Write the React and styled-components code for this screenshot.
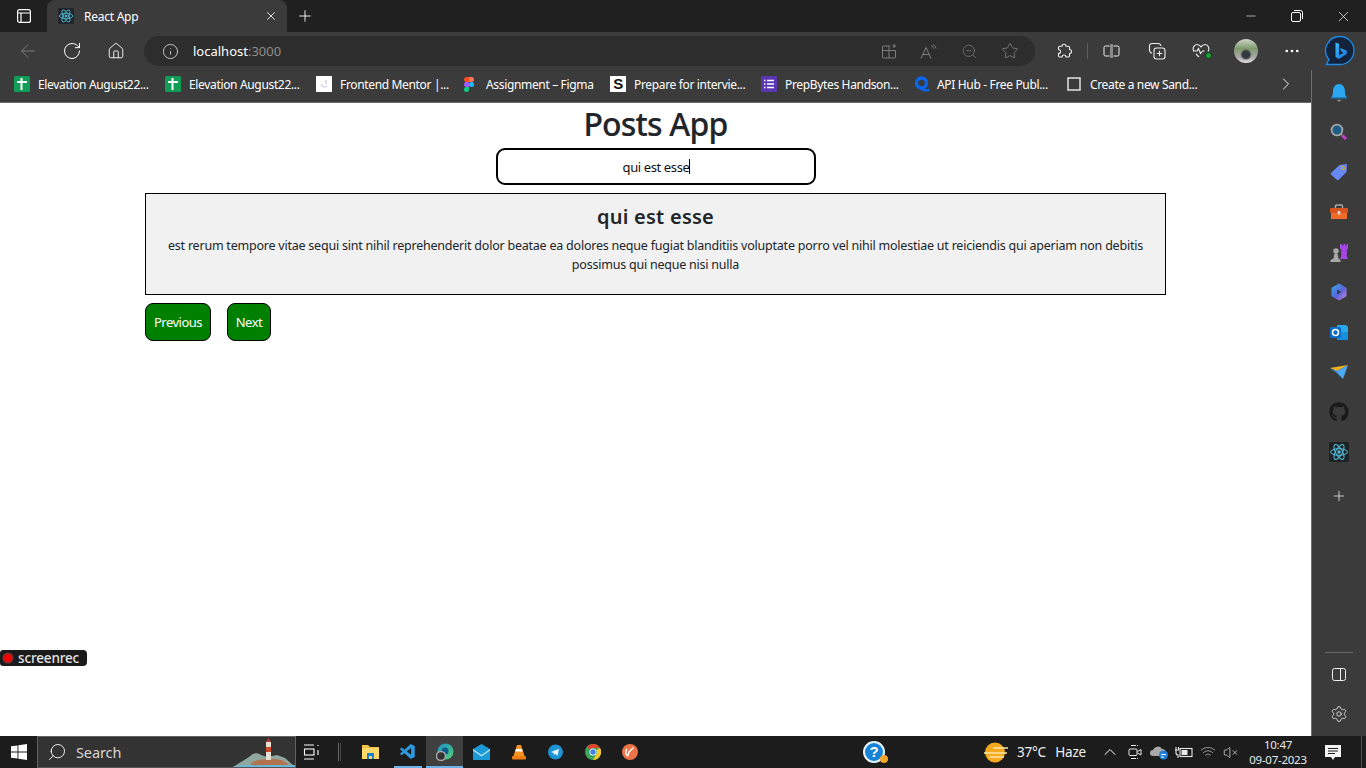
import React from "react";
import styled, { createGlobalStyle } from "styled-components";
import {
  ArrowLeft, RotateCw, Home, Info, ZoomOut, Star, MoreHorizontal, X, Plus, Minus,
  ChevronRight, ChevronUp, Wifi, VolumeX, Search as SearchIcon, Settings,
} from "lucide-react";
import { FaGithub } from "react-icons/fa";
import { VscVscode } from "react-icons/vsc";

const Global = createGlobalStyle`
  html, body { margin: 0; padding: 0; background: #fff; }
  * { box-sizing: border-box; }
  body { font-family: "Noto Sans", "Open Sans", "Liberation Sans", sans-serif; }
`;

const Screen = styled.div`
  width: 1366px; height: 768px; overflow: hidden;
  display: flex; flex-direction: column; background: #fff;
`;
const TabStrip = styled.div`
  height: 32px; flex: none; display: flex; align-items: stretch; background: #202020; color: #fff;
`;
const Slot = styled.div`
  width: ${(p) => p.$w}px; flex: none; display: flex; align-items: center; justify-content: center;
  position: relative;
`;
const Tab = styled.div`
  width: 240px; flex: none; background: #3b3b3b; border-radius: 8px 8px 0 0;
  display: flex; align-items: center; padding-left: 11px; font-size: 12px; color: #fff;
  letter-spacing: -0.25px;
`;
const TabTitle = styled.span`
  margin-left: 10px; flex: 1;
`;
const Grow = styled.div`
  flex: 1;
`;
const NavBar = styled.div`
  height: 38px; flex: none; background: #3b3b3b; display: flex; align-items: center;
  padding-left: 6px; color: #fff;
`;
const AddressBar = styled.div`
  width: 891px; height: 30px; flex: none; margin-left: 6px; margin-right: 6px;
  background: #2d2d2d; border-radius: 15px; display: flex; align-items: center;
  padding-left: 18px; padding-right: 4px; font-size: 13px;
`;
const Host = styled.span`
  margin-left: 14px; flex: 1; color: #fff;
`;
const Port = styled.span`
  color: #8d8d8d;
`;
const VLine = styled.div`
  width: 1px; height: 16px; background: #5d5d5d;
`;
const Middle = styled.div`
  flex: 1; min-height: 0; display: flex;
`;
const Left = styled.div`
  flex: 1; min-width: 0; display: flex; flex-direction: column;
`;
const BookmarkBar = styled.div`
  height: 33px; flex: none; background: #3b3b3b; border-bottom: 1px solid #6a6a6a;
  display: flex; align-items: center; padding: 0 0 4px 14px; color: #fff;
`;
const Bookmark = styled.div`
  width: ${(p) => p.$w}px; flex: none; display: flex; align-items: center;
  font-size: 12px; letter-spacing: -0.34px; white-space: nowrap;
`;
const BookmarkLabel = styled.span`
  margin-left: ${(p) => p.$gap || 8}px;
`;
const LetterIcon = styled.span`
  width: 16px; height: 16px; flex: none; background: #fff; color: #111; font: 700 15px/16px "Liberation Sans", sans-serif;
  text-align: center;
`;
const Page = styled.main`
  position: relative; flex: 1; min-height: 0; background: #fff; color: #212529;
  display: flex; flex-direction: column; align-items: center;
`;
const Heading = styled.h1`
  margin: 0; font-size: 32px; line-height: 42px; font-weight: 500; letter-spacing: -0.8px; color: #212529;
  -webkit-text-stroke: 0.15px #212529;
`;
const SearchField = styled.div`
  width: 320px; height: 37px; margin-top: 3px; border: 2px solid #000; border-radius: 9px;
  display: flex; align-items: center; justify-content: center; padding-left: 2px;
  font-size: 13px; letter-spacing: -0.38px; color: #111;
`;
const Caret = styled.span`
  width: 1px; height: 15px; background: #000;
`;
const Content = styled.section`
  width: 1021px; margin-top: 8px;
`;
const Card = styled.article`
  height: 102px; background: #f1f1f1; border: 1px solid #000; text-align: center;
  padding: 9px 16px 0; color: #212529;
`;
const CardTitle = styled.h2`
  margin: 0; font-size: 20px; line-height: 28px; font-weight: 600; letter-spacing: 0.25px;
`;
const CardBody = styled.p`
  margin: 5px 0 0; font-size: 12.5px; line-height: 19px; letter-spacing: -0.225px;
`;
const Pager = styled.div`
  display: flex; gap: 16px; margin-top: 8px;
`;
const PagerButton = styled.button`
  height: 38px; width: ${(p) => p.$w}px; background: #008000; color: #fff; border: 1px solid #000;
  border-radius: 8px; font: 13px "Noto Sans", sans-serif; letter-spacing: -0.5px; padding: 0;
`;
const RecBadge = styled.div`
  position: absolute; left: 0; top: 547px; width: 87px; height: 16px; background: #1b1b1b;
  border-radius: 3px 4px 4px 3px; display: flex; align-items: center; padding-left: 3px;
  color: #e4e4e4; font-size: 13.5px; font-weight: 500; letter-spacing: -0.15px; line-height: 16px;
`;
const RecDot = styled.span`
  width: 8px; height: 8px; border-radius: 50%; background: #f40000; box-shadow: 0 0 0 1.5px #7a3535;
  margin-right: 6px; margin-left: 1px;
`;
const Sidebar = styled.aside`
  width: 55px; flex: none; background: #3b3b3b; border-left: 1px solid #6d6d6d;
  display: flex; flex-direction: column; align-items: center; padding: 2px 0; color: #ececec;
`;
const SideSlot = styled.div`
  height: 40px; width: 100%; flex: none; display: flex; align-items: center; justify-content: center;
  margin-top: ${(p) => p.$offset || 0}px;
`;
const SideLine = styled.div`
  width: 28px; height: 1px; background: #6a6a6a; margin-top: auto; margin-bottom: 1px;
`;
const Taskbar = styled.footer`
  height: 32px; flex: none; background: #1c1c1c; display: flex; align-items: stretch; color: #fff;
`;
const SearchBox = styled.div`
  width: 259px; flex: none; background: #333; border: 1px solid #626262; border-bottom-color: #555;
  display: flex; align-items: center; padding-left: 9px; font-size: 14.5px; color: #d5d5d5; letter-spacing: -0.1px;
  position: relative; overflow: hidden;
`;
const LensGlyph = styled(SearchIcon)`
  transform: scaleX(-1);
`;
const SearchLabel = styled.span`
  margin-left: 9px;
`;
const AppSlot = styled.div`
  width: 37px; flex: none; display: flex; align-items: center; justify-content: center; position: relative;
  background: ${(p) => (p.$active ? "#404040" : "transparent")};
  &::after {
    content: ""; position: absolute; bottom: 0; height: 2px; background: #6cb2e8;
    left: ${(p) => (p.$active ? "0" : "5px")}; right: ${(p) => (p.$active ? "0" : "4px")};
    display: ${(p) => (p.$active || p.$open ? "block" : "none")};
  }
`;
const Tray = styled.div`
  margin-left: 209px; display: flex; align-items: stretch;
`;
const WeatherText = styled.span`
  align-self: center; font-size: 13.5px; letter-spacing: -0.2px; margin-left: 6px; color: #f0f0f0;
  white-space: nowrap; word-spacing: 6px; width: 81px;
`;
const Clock = styled.div`
  width: 64px; flex: none; display: flex; flex-direction: column; align-items: center; justify-content: center;
  font-size: 11.5px; line-height: 15px; letter-spacing: -0.25px; color: #e8e8e8;
`;
const DesktopEdge = styled.div`
  width: 1px; background: #4d4d4d; margin-left: 5px;
`;
const GreenDot = styled.span`
  position: absolute; right: 11px; bottom: 0; width: 7px; height: 7px; border-radius: 50%;
  background: #1f9d3a; border: 1px solid #0b3d17;
`;
const Avatar = styled.div`
  width: 24px; height: 24px; border-radius: 50%;
  background: radial-gradient(circle at 50% 65%, #33383f 0 18%, transparent 30%), linear-gradient(#cfd6c8 0%, #7f9a6c 40%, #a7a7a7 75%, #e3e3e3 100%);
`;

const ReactIcon = ({ size = 16, bg = "#20262b" }) => (
  <svg width={size} height={size} viewBox="0 0 20 20">
    <rect width="20" height="20" rx="2" fill={bg} />
    <g fill="none" stroke="#53c1de" strokeWidth="1">
      <ellipse cx="10" cy="10" rx="8.4" ry="3.3" />
      <ellipse cx="10" cy="10" rx="8.4" ry="3.3" transform="rotate(60 10 10)" />
      <ellipse cx="10" cy="10" rx="8.4" ry="3.3" transform="rotate(120 10 10)" />
    </g>
    <circle cx="10" cy="10" r="1.7" fill="#53c1de" />
  </svg>
);
const TabsIcon = () => (
  <svg width="16" height="16" viewBox="0 0 16 16" fill="none" stroke="#fff" strokeWidth="1.2">
    <rect x="1.6" y="1.6" width="12.8" height="12.8" rx="2" />
    <path d="M1.6 5h12.8M5 5v9.4" />
  </svg>
);
const CopyGlyph = () => (
  <svg width="12" height="12" viewBox="0 0 12 12" fill="none" stroke="#fff" strokeWidth="1">
    <rect x=".5" y="2.5" width="9" height="9" rx="1.5" />
    <path d="M3 .5h6.500A2 2 0 0 1 11.500 2.500V9" />
  </svg>
);
const SheetIcon = () => (
  <svg width="16" height="16" viewBox="0 0 16 16">
    <rect width="16" height="16" rx="1.5" fill="#0f9d58" />
    <path d="M3 6h10M7.500 2v12" stroke="#fff" strokeWidth="2" fill="none" />
  </svg>
);
const MentorIcon = () => (
  <svg width="16" height="16" viewBox="0 0 16 16">
    <rect width="16" height="16" fill="#fff" />
    <path d="M5 8c1 3 4 3.500 6 2M10 4v4" stroke="#b9b7e3" strokeWidth="1" fill="none" />
  </svg>
);
const FigmaIcon = () => (
  <svg width="10" height="15" viewBox="0 0 10 15">
    <path d="M0 2.500A2.500 2.500 0 0 1 2.500 0H5v5H2.500A2.500 2.500 0 0 1 0 2.500z" fill="#f24e1e" />
    <path d="M5 0h2.500a2.500 2.500 0 0 1 0 5H5z" fill="#ff7262" />
    <path d="M0 7.500A2.500 2.500 0 0 1 2.500 5H5v5H2.500A2.500 2.500 0 0 1 0 7.500z" fill="#a259ff" />
    <circle cx="7.500" cy="7.500" r="2.500" fill="#1abcfe" />
    <path d="M0 12.500A2.500 2.500 0 0 1 2.500 10H5v2.500a2.500 2.500 0 0 1-5 0z" fill="#0acf83" />
  </svg>
);
const ListIcon = () => (
  <svg width="16" height="16" viewBox="0 0 16 16">
    <rect width="16" height="16" rx="1" fill="#5b36b3" />
    <path d="M3 4.500h1.500M6 4.500h7M3 8h1.500M6 8h7M3 11.500h1.500M6 11.500h7" stroke="#fff" strokeWidth="1.700" />
  </svg>
);
const ApiIcon = () => (
  <svg width="16" height="16" viewBox="0 0 16 16" fill="none">
    <circle cx="7.500" cy="7" r="5" stroke="#0a66e8" strokeWidth="3.400" />
    <path d="M7 13c3 2 6 1.500 8.500 1" stroke="#0a66e8" strokeWidth="2.400" />
  </svg>
);
const BoxIcon = () => (
  <svg width="14" height="14" viewBox="0 0 14 14" fill="none" stroke="#eee" strokeWidth="1.400">
    <rect x="1" y="1" width="12" height="12" />
  </svg>
);
const AddTabIcon = () => (
  <svg width="16" height="16" viewBox="0 0 16 16" fill="none" stroke="#7d7d7d" strokeWidth="1">
    <path d="M9 3H2.500A1 1 0 0 0 1.500 4v10a1 1 0 0 0 1 1h11a1 1 0 0 0 1-1V7.500H1.500M8 3v12M11.500 3h3.500M13.200 1v4" />
  </svg>
);
const ReadIcon = () => (
  <svg width="18" height="17" viewBox="0 0 18 16" fill="none" stroke="#7f7f7f" strokeWidth="1">
    <path d="M1 15 6 4l5 11M2.800 11h6.400M11 2c1.400.6 2.200 1.600 2.500 3M13 1c1.600.8 2.500 2 3 4" />
  </svg>
);
const PuzzleIcon = () => (
  <svg width="16" height="16" viewBox="0 0 16 16" fill="none" stroke="#eee" strokeWidth="1.100" strokeLinejoin="round">
    <path d="M6 3.200A2 2 0 0 1 10 3.200h2.300a1.200 1.200 0 0 1 1.200 1.200v2.100a2 2 0 0 1 0 4v2.300a1.200 1.200 0 0 1-1.200 1.200H10a2 2 0 0 0-4 0H3.700a1.200 1.200 0 0 1-1.200-1.200v-2.300a2 2 0 0 0 0-4V4.400a1.200 1.200 0 0 1 1.200-1.200z" />
  </svg>
);
const SplitIcon = () => (
  <svg width="17" height="16" viewBox="0 0 17 16" fill="none" stroke="#eee" strokeWidth="1">
    <path d="M6.500 3h-4A1.500 1.500 0 0 0 1 4.500v7A1.500 1.500 0 0 0 2.500 13h4M10.500 3h4A1.500 1.500 0 0 1 16 4.500v7a1.500 1.500 0 0 1-1.500 1.500h-4" />
    <rect x="7" y="1" width="3" height="14" rx=".8" fill="#8a8a8a" stroke="none" />
  </svg>
);
const CollectIcon = () => (
  <svg width="18" height="18" viewBox="0 0 18 18" fill="none" stroke="#eee" strokeWidth="1.100">
    <rect x="6" y="6" width="11" height="11" rx="2.500" />
    <path d="M11.500 8.800v5.400M8.800 11.500h5.400M13 4c-.3-1.500-1.300-2.500-3-2.500H4A2.500 2.500 0 0 0 1.500 4v4c0 1.500.8 2.700 2.500 3.200" />
  </svg>
);
const HealthIcon = () => (
  <svg width="18" height="16" viewBox="0 0 18 16" fill="none" stroke="#eee" strokeWidth="1.100">
    <path d="M2 8.500C0 5 2 1.500 5 1.500c1.700 0 3 1 4 2.300 1-1.300 2.300-2.300 4-2.300 3 0 5 3.500 3 7M1 8h4l1.500-2.500 2 5L10.500 8h2M4 11l3 3" />
  </svg>
);
const BingIcon = () => (
  <svg width="32" height="32" viewBox="0 0 32 32">
    <defs>
      <linearGradient id="bingB" x1="0" y1="0" x2="1" y2="1">
        <stop offset="0" stopColor="#37bdf5" />
        <stop offset="1" stopColor="#1b6fe0" />
      </linearGradient>
    </defs>
    <path d="M16 1.500a14 14 0 0 1 0 28H2.500l2.400-5A14 14 0 0 1 16 1.500z" fill="#14233c" stroke="#1c8ae6" strokeWidth="1.300" />
    <path d="M11.500 7.500 15 8.800v11.500l4.500-2.600-2.200-1.100-1.500-3.700 7 2.500v3.500L15 24l-3.500-2z" fill="url(#bingB)" />
  </svg>
);
const BellIcon = () => (
  <svg width="18" height="19" viewBox="0 0 18 19">
    <path d="M1 14.500c1.500-1.500 2-3 2-6C3 4 5.500 1 9 1s6 3 6 7.500c0 3 .5 4.500 2 6z" fill="#2aa7f2" />
    <path d="M1 14.500h16v1H1z" fill="#1685d8" />
    <path d="M7 17h4l-2 1.500z" fill="#bbb" />
  </svg>
);
const LensIcon = () => (
  <svg width="18" height="18" viewBox="0 0 18 18">
    <circle cx="7" cy="7" r="5.400" fill="#1d5c86" stroke="#a5a5a5" strokeWidth="1.800" />
    <path d="M11 11l1 1" stroke="#a5a5a5" strokeWidth="2" />
    <path d="M12.500 12.500l3.500 3.500" stroke="#c63fd0" strokeWidth="3" />
  </svg>
);
const TagIcon = () => (
  <svg width="18" height="18" viewBox="0 0 18 18">
    <path d="M1 10 9.500 2 17 1l-.5 8-8 8a1 1 0 0 1-1.400 0L1 11.400A1 1 0 0 1 1 10z" fill="#6689f5" />
    <circle cx="12.800" cy="5" r="1.700" fill="#6689f5" stroke="#f2b200" strokeWidth="1" />
  </svg>
);
const ToolboxIcon = () => (
  <svg width="18" height="16" viewBox="0 0 18 16">
    <path d="M5.500 4V2a1 1 0 0 1 1-1h5a1 1 0 0 1 1 1v2" fill="none" stroke="#a8a8a8" strokeWidth="1.400" />
    <rect y="4" width="18" height="5" rx="1" fill="#d9541e" />
    <rect x="1" y="9" width="16" height="6" fill="#f06c2a" />
    <rect x="7.700" y="7" width="2.600" height="3.500" fill="#d8d8d8" />
  </svg>
);
const ChessIcon = () => (
  <svg width="19" height="19" viewBox="0 0 19 19">
    <path d="M10 1h2v1.500h1.500V1h1.500v1.500h1.500V1H18v4.500l-1.200 1v7L18 16h-8l1.200-2.500v-7l-1.200-1z" fill="#a646e8" />
    <circle cx="6" cy="8" r="2.700" fill="#a8a8a8" />
    <path d="M4.500 10.500h3l1 5 2 1.500v2H.5v-2l3-1.500z" fill="#a8a8a8" />
  </svg>
);
const CopilotIcon = () => (
  <svg width="18" height="18" viewBox="0 0 18 18">
    <defs>
      <linearGradient id="cp" x1="0" y1="0" x2="1" y2="1">
        <stop offset="0" stopColor="#3ca5e8" />
        <stop offset=".55" stopColor="#5864dd" />
        <stop offset="1" stopColor="#c887e0" />
      </linearGradient>
    </defs>
    <path d="M9 1l7 4v8l-7 4-7-4V5z" fill="url(#cp)" stroke="url(#cp)" strokeWidth="1" strokeLinejoin="round" />
    <path d="M7 6.500l4.500 2.500L7 11.500z" fill="#3b3b3b" />
  </svg>
);
const OutlookIcon = () => (
  <svg width="18" height="17" viewBox="0 0 18 17">
    <path d="M7 1h9l2 2v11H7z" fill="#28a8ea" />
    <path d="M7 8h11v7a1 1 0 0 1-1 1H7z" fill="#1490df" />
    <rect y="3" width="11" height="11" rx="1" fill="#0a6cc4" />
    <circle cx="5.500" cy="8.500" r="3" fill="none" stroke="#fff" strokeWidth="1.500" />
  </svg>
);
const SendIcon = () => (
  <svg width="18" height="14" viewBox="0 0 18 14">
    <path d="M0 3 18 0 7 6z" fill="#f5b21b" />
    <path d="M0 3l7 3 1 3z" fill="#3b95e8" />
    <path d="M7 6 18 0l-5 14-5-5z" fill="#4ba9f3" />
  </svg>
);
const PanelIcon = () => (
  <svg width="14" height="13" viewBox="0 0 14 13" fill="none" stroke="#eee" strokeWidth="1">
    <rect x=".5" y=".5" width="13" height="12" rx="2" />
    <path d="M8.500.5v12" />
  </svg>
);
const WinIcon = () => (
  <svg width="16" height="16" viewBox="0 0 16 16" fill="#fff">
    <path d="M0 2.300 6.500 1.400v6.100H0zM7.400 1.300 16 0v7.500H7.400zM0 8.400h6.500v6.200L0 13.700zM7.400 8.400H16V16l-8.600-1.300z" />
  </svg>
);
const LighthouseArt = styled.svg`
  position: absolute; right: 0; bottom: 0;
`;
const Lighthouse = () => (
  <LighthouseArt width="62" height="30" viewBox="0 0 62 30">
    <path d="M0 30 16 20c4-4 8-5 12-2l6 2 10-2 8 3 10 9z" fill="#8fa79d" />
    <path d="M18 26c6-4 14-4 22-4 8 0 14 3 18 8H18z" fill="#b2724d" />
    <rect x="33" y="5" width="5" height="18" fill="#e8e0d4" />
    <rect x="33" y="10" width="5" height="5" fill="#c9492d" />
    <path d="M33 5l2.500-4L38 5z" fill="#b8392a" />
    <path d="M0 30h62v-2H8z" fill="#69b7d4" />
  </LighthouseArt>
);
const TaskViewIcon = () => (
  <svg width="16" height="16" viewBox="0 0 16 16" fill="none" stroke="#fff" strokeWidth="1.100">
    <path d="M1 1h10M1 15h10M15 1v1M15 6v5" />
    <rect x="1.500" y="5" width="9.500" height="6" />
  </svg>
);
const ThinDivider = styled.div`
  width: 3px; height: 18px; border-left: 1px solid #666; border-right: 1px solid #444;
`;
const FolderIcon = () => (
  <svg width="17" height="16" viewBox="0 0 17 16">
    <path d="M0 1h6l2 2h9v12H0z" fill="#f6c244" />
    <rect y="4" width="17" height="11" fill="#fbd968" />
    <path d="M5 9h7v6h-2v-3H7v3H5z" fill="#1a7fd0" />
  </svg>
);
const EdgeIcon = () => (
  <svg width="18" height="18" viewBox="0 0 18 18">
    <defs>
      <linearGradient id="eg" x1="0" y1="0" x2="1" y2="1">
        <stop offset="0" stopColor="#1b8fd0" />
        <stop offset="1" stopColor="#53d26e" />
      </linearGradient>
    </defs>
    <circle cx="9.500" cy="8.500" r="8" fill="url(#eg)" />
    <circle cx="9" cy="8" r="3.500" fill="#0c5a8a" />
    <circle cx="5" cy="13" r="4.500" fill="#333" stroke="#aaa" strokeWidth="1.500" />
  </svg>
);
const MailIcon = () => (
  <svg width="17" height="16" viewBox="0 0 17 16">
    <path d="M0 5 8.500 0 17 5v11H0z" fill="#1c9ad6" />
    <path d="M0 5l8.500 6L17 5v1.500l-8.500 6-8.500-6z" fill="#bfe7f7" />
  </svg>
);
const VlcIcon = () => (
  <svg width="14" height="16" viewBox="0 0 14 16">
    <path d="M5 1h4l3.500 11h-11z" fill="#f7931e" />
    <path d="M4 5h6l.8 2.500H3.200z" fill="#fff" />
    <rect y="12" width="14" height="3.500" rx="1" fill="#f37c10" />
  </svg>
);
const TelegramIcon = () => (
  <svg width="15" height="16" viewBox="0 0 15 16">
    <circle cx="7.500" cy="8" r="7.500" fill="#1c93d2" />
    <path d="M3 8l8-3.300-1.300 7L7 9.800l-1 1.400-.4-2.200z" fill="#e6f4fb" />
  </svg>
);
const ChromeIcon = () => (
  <svg width="16" height="16" viewBox="0 0 16 16">
    <circle cx="8" cy="8" r="8" fill="#3ba55d" />
    <path d="M8 0a8 8 0 0 1 7 4H8a4 4 0 0 0-3.500 2L2 2.500A8 8 0 0 1 8 0z" fill="#e2452f" />
    <path d="M15 4a8 8 0 0 1-7 12l3.500-6A4 4 0 0 0 11.500 6z" fill="#f8c927" />
    <circle cx="8" cy="8" r="3.500" fill="#fff" />
    <circle cx="8" cy="8" r="2.700" fill="#3f7fe4" />
  </svg>
);
const OrangeIcon = () => (
  <svg width="16" height="16" viewBox="0 0 16 16">
    <circle cx="8" cy="8" r="8" fill="#ef7344" />
    <path d="M11.500 3.500 7 8l-1.500 4.500M5 5c-1.500 2-1.500 5 .5 7" stroke="#fff" strokeWidth="1.400" fill="none" />
  </svg>
);
const HelpBadge = styled.span`
  width: 22px; height: 22px; border-radius: 50%; background: #1683d8; border: 2px solid #e9f5fd; color: #fff;
  font: 700 15px/18px "Liberation Sans", sans-serif; text-align: center; margin-left: -2px;
`;
const HelpDot = styled.span`
  position: absolute; right: 5px; bottom: 5px; width: 8px; height: 8px; border-radius: 50%; background: #f0a62b;
`;
const SunIcon = () => (
  <svg width="24" height="21" viewBox="0 0 24 21">
    <circle cx="11" cy="10.500" r="10" fill="#f5a91d" />
    <path d="M9 6h15M0 11h23M5 15h15" stroke="#fbe7a8" strokeWidth="1.700" />
  </svg>
);
const MeetIcon = () => (
  <svg width="14" height="16" viewBox="0 0 14 16" fill="none" stroke="#e8e8e8" strokeWidth="1">
    <path d="M3 1.500h7M3 14.500h7" strokeDasharray="5 1" />
    <rect x="1" y="5" width="8" height="6.500" rx="1" />
    <path d="M9.500 7.500 13 5.500v5.500l-3.500-2" />
  </svg>
);
const CloudIcon = () => (
  <svg width="20" height="16" viewBox="0 0 20 16">
    <path d="M3 12a3 3 0 0 1 0-6 5 5 0 0 1 9-1 4 4 0 0 1 4 4v3z" fill="#a9a9a9" />
    <circle cx="13.500" cy="11" r="4.500" fill="#1f7fd8" />
    <path d="M11 10.500l5 0M14 13h-3" stroke="#fff" strokeWidth="1.200" />
  </svg>
);
const BatteryIcon = () => (
  <svg width="18" height="14" viewBox="0 0 18 14" fill="none" stroke="#e8e8e8" strokeWidth="1.100">
    <rect x="5" y="3.500" width="12" height="8" />
    <rect x="6.500" y="5" width="6" height="5" fill="#e8e8e8" stroke="none" />
    <path d="M0 5h4M1 2v6a2 2 0 0 0 2 2v3M3.500 2v3" />
  </svg>
);
const NotifyIcon = () => (
  <svg width="16" height="15" viewBox="0 0 16 15">
    <path d="M0 0h16v12h-6l-2 3-2-3H0z" fill="#f4f4f4" />
    <path d="M3 3.500h10M3 6h10M3 8.500h7" stroke="#1c1c1c" strokeWidth="1" />
  </svg>
);

const bookmarks = [
  { w: 151, icon: <SheetIcon />, label: "Elevation August22..." },
  { w: 151, icon: <SheetIcon />, label: "Elevation August22..." },
  { w: 148, icon: <MentorIcon />, label: "Frontend Mentor |..." },
  { w: 146, icon: <FigmaIcon />, label: "Assignment – Figma", gap: 12 },
  { w: 151, icon: <LetterIcon>S</LetterIcon>, label: "Prepare for intervie..." },
  { w: 153, icon: <ListIcon />, label: "PrepBytes Handson..." },
  { w: 153, icon: <ApiIcon />, label: "API Hub - Free Publ...", gap: 7 },
  { w: 204, icon: <BoxIcon />, label: "Create a new Sand...", gap: 9 },
];

const sideIcons = [
  <BellIcon />, <LensIcon />, <TagIcon />, <ToolboxIcon />, <ChessIcon />, <CopilotIcon />, <OutlookIcon />,
  <SendIcon />, <FaGithub size={20} color="#191919" />, <ReactIcon size={20} bg="#1f2225" />,
];

export default function App() {
  return (
    <Screen>
      <Global />
      <TabStrip>
        <Slot $w={47}><TabsIcon /></Slot>
        <Tab>
          <ReactIcon />
          <TabTitle>React App</TabTitle>
          <Slot $w={32}><X size={14} strokeWidth={1.4} /></Slot>
        </Tab>
        <Slot $w={36}><Plus size={18} strokeWidth={1.2} /></Slot>
        <Grow />
        <Slot $w={46}><Minus size={14} strokeWidth={1.1} /></Slot>
        <Slot $w={46}><CopyGlyph /></Slot>
        <Slot $w={46}><X size={17} strokeWidth={1} /></Slot>
      </TabStrip>
      <NavBar>
        <Slot $w={44}><ArrowLeft size={22} strokeWidth={1} color="#808080" /></Slot>
        <Slot $w={44}><RotateCw size={20} strokeWidth={1.2} /></Slot>
        <Slot $w={44}><Home size={18} strokeWidth={1.2} /></Slot>
        <AddressBar>
          <Info size={17} strokeWidth={1.1} color="#e8e8e8" />
          <Host>localhost<Port>:3000</Port></Host>
          <Slot $w={40}><AddTabIcon /></Slot>
          <Slot $w={40}><ReadIcon /></Slot>
          <Slot $w={40}><ZoomOut size={17} strokeWidth={1} color="#7f7f7f" /></Slot>
          <Slot $w={41}><Star size={18} strokeWidth={1} color="#8a8a8a" /></Slot>
          <Slot $w={1} />
        </AddressBar>
        <Slot $w={46}><PuzzleIcon /></Slot>
        <VLine />
        <Slot $w={47}><SplitIcon /></Slot>
        <Slot $w={44}><CollectIcon /></Slot>
        <Slot $w={44}><HealthIcon /><GreenDot /></Slot>
        <Slot $w={46}><Avatar /></Slot>
        <Slot $w={46}><MoreHorizontal size={18} strokeWidth={1.6} /></Slot>
        <Slot $w={50}><BingIcon /></Slot>
      </NavBar>
      <Middle>
        <Left>
          <BookmarkBar>
            {bookmarks.map((b) => (
              <Bookmark key={b.label + b.w} $w={b.w}>
                {b.icon}
                <BookmarkLabel $gap={b.gap}>{b.label}</BookmarkLabel>
              </Bookmark>
            ))}
            <Slot $w={30}><ChevronRight size={20} strokeWidth={1.1} /></Slot>
          </BookmarkBar>
          <Page>
            <Heading>Posts App</Heading>
            <SearchField>qui est esse<Caret /></SearchField>
            <Content>
              <Card>
                <CardTitle>qui est esse</CardTitle>
                <CardBody>
                  est rerum tempore vitae sequi sint nihil reprehenderit dolor beatae ea dolores neque fugiat blanditiis voluptate porro vel nihil molestiae ut reiciendis qui aperiam non debitis possimus qui neque nisi nulla
                </CardBody>
              </Card>
              <Pager>
                <PagerButton $w={66}>Previous</PagerButton>
                <PagerButton $w={44}>Next</PagerButton>
              </Pager>
            </Content>
            <RecBadge><RecDot />screenrec</RecBadge>
          </Page>
        </Left>
        <Sidebar>
          {sideIcons.map((icon, i) => <SideSlot key={i}>{icon}</SideSlot>)}
          <SideSlot $offset={4}><Plus size={16} strokeWidth={1.2} /></SideSlot>
          <SideLine />
          <SideSlot><PanelIcon /></SideSlot>
          <SideSlot><Settings size={18} strokeWidth={1.1} /></SideSlot>
        </Sidebar>
      </Middle>
      <Taskbar>
        <Slot $w={37}><WinIcon /></Slot>
        <SearchBox>
          <LensGlyph size={20} strokeWidth={1.2} color="#eee" />
          <SearchLabel>Search</SearchLabel>
          <Lighthouse />
        </SearchBox>
        <Slot $w={30}><TaskViewIcon /></Slot>
        <Slot $w={26}><ThinDivider /></Slot>
        <AppSlot><FolderIcon /></AppSlot>
        <AppSlot $open><VscVscode size={18} color="#2a9ae0" /></AppSlot>
        <AppSlot $active><EdgeIcon /></AppSlot>
        <AppSlot><MailIcon /></AppSlot>
        <AppSlot><VlcIcon /></AppSlot>
        <AppSlot><TelegramIcon /></AppSlot>
        <AppSlot><ChromeIcon /></AppSlot>
        <AppSlot><OrangeIcon /></AppSlot>
        <Tray>
          <Slot $w={36}><HelpBadge>?</HelpBadge><HelpDot /></Slot>
          <Slot $w={88} />
          <Slot $w={30}><SunIcon /></Slot>
          <WeatherText>37°C Haze</WeatherText>
          <Slot $w={24}><ChevronUp size={20} strokeWidth={1.2} /></Slot>
          <Slot $w={25}><MeetIcon /></Slot>
          <Slot $w={25}><CloudIcon /></Slot>
          <Slot $w={24}><BatteryIcon /></Slot>
          <Slot $w={24}><Wifi size={16} strokeWidth={1} color="#cfcfcf" /></Slot>
          <Slot $w={20}><VolumeX size={15} strokeWidth={1} /></Slot>
          <Slot $w={6} />
          <Clock><span>10:47</span><span>09-07-2023</span></Clock>
          <Slot $w={46}><NotifyIcon /></Slot>
          <DesktopEdge />
        </Tray>
      </Taskbar>
    </Screen>
  );
}
